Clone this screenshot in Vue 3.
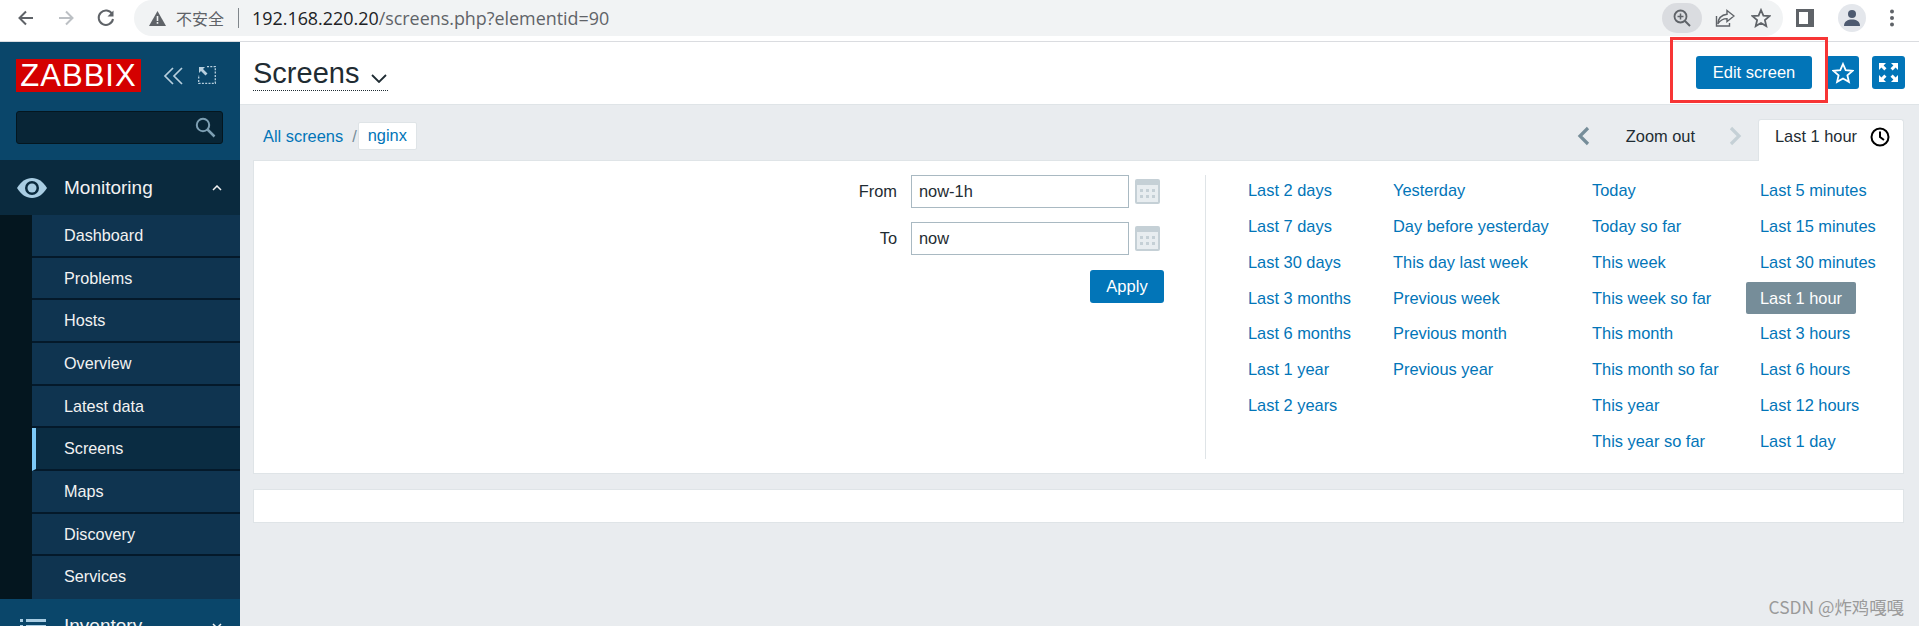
<script setup>
const menu = ['Dashboard', 'Problems', 'Hosts', 'Overview', 'Latest data', 'Screens', 'Maps', 'Discovery', 'Services']
const columns = [
  { width: 145, items: ['Last 2 days', 'Last 7 days', 'Last 30 days', 'Last 3 months', 'Last 6 months', 'Last 1 year', 'Last 2 years'] },
  { width: 199, items: ['Yesterday', 'Day before yesterday', 'This day last week', 'Previous week', 'Previous month', 'Previous year'] },
  { width: 168, items: ['Today', 'Today so far', 'This week', 'This week so far', 'This month', 'This month so far', 'This year', 'This year so far'] },
  { width: 143, items: ['Last 5 minutes', 'Last 15 minutes', 'Last 30 minutes', 'Last 1 hour', 'Last 3 hours', 'Last 6 hours', 'Last 12 hours', 'Last 1 day'] }
]
</script>

<template>
  <div class="window">
    <header class="chrome">
      <svg class="nav" width="20" height="20" viewBox="0 0 20 20"><path d="M17 10H4M10 3.500 3.500 10l6.500 6.500" fill="none" stroke="#5f6368" stroke-width="2"/></svg>
      <svg class="nav" width="20" height="20" viewBox="0 0 20 20"><path d="M3 10h13M10 3.500l6.500 6.500-6.500 6.500" fill="none" stroke="#bcc0c4" stroke-width="2"/></svg>
      <svg class="nav" width="20" height="20" viewBox="0 0 20 20"><path d="M16.200 6.200A7.200 7.200 0 1 0 17 11" fill="none" stroke="#5f6368" stroke-width="2"/><path d="M17.500 2.500v6h-6z" fill="#5f6368"/></svg>
      <div class="omnibox">
        <svg width="17" height="15" viewBox="0 0 17 15"><path d="M8.500 0 17 15H0z" fill="#5f6368"/><path d="M7.700 5h1.600v5H7.700zM7.700 11h1.600v1.700H7.700z" fill="#f1f3f4"/></svg>
        <span class="insecure">不安全</span>
        <span class="sep"></span>
        <span class="url"><b>192.168.220.20</b>/screens.php?elementid=90</span>
        <span class="grow"></span>
        <span class="zoompill">
          <svg width="20" height="20" viewBox="0 0 20 20"><circle cx="8.500" cy="8.500" r="6" fill="none" stroke="#5f6368" stroke-width="1.800"/><path d="M13 13l5 5" stroke="#5f6368" stroke-width="2"/><path d="M5.500 8.500h6M8.500 5.500v6" stroke="#5f6368" stroke-width="1.500"/></svg>
        </span>
        <svg class="omni-ico" width="20" height="20" viewBox="0 0 20 20"><path d="M12 2.500 19 8l-7 5.500V10.600C7.500 10.600 5 12.500 2.800 16c.4-5.500 3.700-9 9.200-9.700z" fill="none" stroke="#5f6368" stroke-width="1.400"/><path d="M1.500 8v10h13v-3" fill="none" stroke="#5f6368" stroke-width="1.400"/></svg>
        <svg class="omni-star" width="20" height="20" viewBox="0 0 20 20"><path d="m10 2 2.400 5.600 6.100.5-4.600 4 1.400 6L10 15l-5.300 3.100 1.400-6-4.600-4 6.100-.5z" fill="none" stroke="#5f6368" stroke-width="1.800"/></svg>
      </div>
      <svg class="panel" width="18" height="18" viewBox="0 0 18 18"><path d="M0 0h18v18H0z" fill="#5f6368"/><path d="M3 3h9v12H3z" fill="#fff"/></svg>
      <span class="avatar"><svg width="18" height="18" viewBox="0 0 18 18"><circle cx="9" cy="5" r="4" fill="#4d5a70"/><path d="M1 17c0-5 4-6.500 8-6.500S17 12 17 17z" fill="#4d5a70"/></svg></span>
      <svg class="dots" width="6" height="18" viewBox="0 0 6 18"><circle cx="3" cy="2.500" r="2" fill="#5f6368"/><circle cx="3" cy="9" r="2" fill="#5f6368"/><circle cx="3" cy="15.500" r="2" fill="#5f6368"/></svg>
    </header>

    <div class="page">
      <aside class="sidebar">
        <div class="brand">
          <span class="logo">ZABBIX</span>
          <svg class="collapse" width="21" height="18" viewBox="0 0 21 18"><path d="M10 1 2 9l8 8M19 1l-8 8 8 8" fill="none" stroke="#b7cfde" stroke-width="1.700"/></svg>
          <svg class="mode" width="18" height="18" viewBox="0 0 18 18"><path d="M9 .7h8.300V17.300H.7V9" fill="none" stroke="#b7cfde" stroke-width="1.300" stroke-dasharray="2 1.300"/><path d="M1 1h6L5 3l4.500 4.500L7.500 9.500 3 5 1 7z" fill="#b7cfde"/></svg>
        </div>
        <div class="search">
          <svg width="21" height="21" viewBox="0 0 21 21"><circle cx="8" cy="8" r="6.200" fill="none" stroke="#7d9fb3" stroke-width="2"/><path d="m12.500 12.500 7 7" stroke="#7d9fb3" stroke-width="2.500"/></svg>
        </div>
        <div class="section open">
          <svg width="30" height="20" viewBox="0 0 30 20"><path d="M0 10C4 3.500 9 0 15 0s11 3.500 15 10c-4 6.500-9 10-15 10S4 16.500 0 10z" fill="#a9cde3"/><circle cx="15" cy="10" r="7" fill="#0a2a3e"/><circle cx="15" cy="10" r="4.500" fill="#a9cde3"/></svg>
          <span>Monitoring</span>
          <svg class="caret" width="10" height="6" viewBox="0 0 10 6"><path d="M1 5l4-4 4 4" fill="none" stroke="#f2f2f2" stroke-width="1.500"/></svg>
        </div>
        <ul class="submenu">
          <li v-for="m in menu" :key="m" :class="{ active: m === 'Screens' }">{{ m }}</li>
        </ul>
        <div class="section closed">
          <svg width="26" height="18" viewBox="0 0 26 18"><path d="M0 2h3v3H0zM6 2h20v3H6zM0 8h3v3H0zM6 8h20v3H6zM0 14h3v3H0zM6 14h20v3H6z" fill="#a9cde3"/></svg>
          <span>Inventory</span>
          <svg class="caret" width="10" height="6" viewBox="0 0 10 6"><path d="M1 1l4 4 4-4" fill="none" stroke="#f2f2f2" stroke-width="1.500"/></svg>
        </div>
      </aside>

      <main class="main">
        <div class="titlebar">
          <h1 class="title">Screens <svg width="16" height="9" viewBox="0 0 16 9"><path d="M1 1l7 7 7-7" fill="none" stroke="#1f2c33" stroke-width="1.800"/></svg></h1>
          <div class="actions">
            <button class="btn edit">Edit screen</button>
            <button class="btn square">
              <svg width="22" height="22" viewBox="0 0 22 22"><path d="m11 2 2.700 6.200 6.800.6-5.100 4.500 1.500 6.600L11 16.500l-5.900 3.400 1.500-6.600-5.100-4.500 6.800-.6z" fill="none" stroke="#fff" stroke-width="1.800"/></svg>
            </button>
            <button class="btn square">
              <svg width="21" height="21" viewBox="0 0 21 21"><path d="M1 1h7L5.600 3.400 8.500 6.300 6.300 8.500 3.400 5.600 1 8zM20 1v7l-2.400-2.400-2.900 2.900-2.200-2.200 2.900-2.900L13 1zM1 20v-7l2.400 2.400 2.900-2.900 2.200 2.200-2.900 2.900L8 20zM20 20h-7l2.400-2.400-2.900-2.900 2.200-2.200 2.900 2.900L20 13z" fill="#fff"/></svg>
            </button>
          </div>
        </div>

        <div class="navbar">
          <a class="link">All screens</a>
          <span class="slash">/</span>
          <a class="link crumb">nginx</a>
          <span class="grow"></span>
          <svg class="chev" width="13" height="20" viewBox="0 0 13 20"><path d="M11 2 3 10l8 8" fill="none" stroke="#768d99" stroke-width="3.200"/></svg>
          <span class="zoomout">Zoom out</span>
          <svg class="chev" width="13" height="20" viewBox="0 0 13 20"><path d="m2 2 8 8-8 8" fill="none" stroke="#c5d0d6" stroke-width="3.200"/></svg>
          <div class="tab">
            <span>Last 1 hour</span>
            <svg width="20" height="20" viewBox="0 0 20 20"><circle cx="10" cy="10" r="8.500" fill="none" stroke="#000" stroke-width="2"/><path d="M10 4.500V10l4 3" fill="none" stroke="#000" stroke-width="2"/></svg>
          </div>
        </div>

        <section class="filter">
          <div class="form">
            <div class="row">
              <label>From</label>
              <div class="input">now-1h</div>
              <svg class="cal" width="25" height="25" viewBox="0 0 25 25"><rect width="25" height="25" rx="2" fill="#c5d0d6"/><rect x="2" y="6" width="21" height="17" fill="#e8edf0"/><path d="M5 10h3v3H5zM11 10h3v3h-3zM17 10h3v3h-3zM5 16h3v3H5zM11 16h3v3h-3zM17 16h3v3h-3z" fill="#c5d0d6"/></svg>
            </div>
            <div class="row">
              <label>To</label>
              <div class="input">now</div>
              <svg class="cal" width="25" height="25" viewBox="0 0 25 25"><rect width="25" height="25" rx="2" fill="#c5d0d6"/><rect x="2" y="6" width="21" height="17" fill="#e8edf0"/><path d="M5 10h3v3H5zM11 10h3v3h-3zM17 10h3v3h-3zM5 16h3v3H5zM11 16h3v3h-3zM17 16h3v3h-3z" fill="#c5d0d6"/></svg>
            </div>
            <button class="btn apply">Apply</button>
          </div>
          <div class="ranges">
            <div v-for="(c, i) in columns" :key="i" class="col" :style="{ width: c.width + 'px' }">
              <a v-for="t in c.items" :key="t" class="link range" :class="{ selected: t === 'Last 1 hour' }">{{ t }}</a>
            </div>
          </div>
        </section>

        <section class="empty"></section>
      </main>
    </div>

    <div class="annotation"></div>
    <div class="watermark">CSDN @炸鸡嘎嘎</div>
  </div>
</template>

<style scoped>
.window {
  position: relative;
  width: 1919px;
  height: 626px;
  overflow: hidden;
  font-family: "Liberation Sans", Arial, sans-serif;
  font-size: 16.400px;
  background: #e9ecef;
  color: #1f2c33;
}
.grow { flex: 1; }
.chrome {
  height: 42px;
  box-sizing: border-box;
  background: #fff;
  border-bottom: 1px solid #dadce0;
  display: flex;
  align-items: center;
  padding: 0 0 5px 16px;
}
.nav { margin-right: 20px; flex: none; }
.omnibox {
  width: 1649px;
  height: 36px;
  margin: 0 0 0 -2px;
  border-radius: 18px;
  background: #f1f3f4;
  display: flex;
  align-items: center;
  padding-left: 15px;
  box-sizing: border-box;
}
.insecure {
  font-family: "Noto Sans CJK SC", sans-serif;
  font-size: 16px;
  color: #5f6368;
  margin-left: 10px;
}
.sep { width: 1px; height: 20px; background: #80868b; margin: 0 13px 0 14px; }
.url {
  font-family: "Open Sans", sans-serif;
  font-size: 17.900px;
  color: #5f6368;
  white-space: nowrap;
}
.url b { font-weight: 400; color: #202124; }
.zoompill {
  width: 40px;
  height: 30px;
  border-radius: 15px;
  background: #dadce0;
  display: flex;
  align-items: center;
  justify-content: center;
  margin-right: 13px;
}
.omni-ico { margin-right: 16px; }
.omni-star { margin-right: 12px; }
.panel { margin-left: 13px; margin-right: 24px; }
.avatar {
  width: 28px;
  height: 28px;
  border-radius: 50%;
  background: #e4e7ec;
  display: flex;
  align-items: center;
  justify-content: center;
}
.dots { margin-left: 23px; }

.page { display: flex; height: 584px; }
.sidebar { width: 240px; flex: none; background: #0a466a; display: flex; flex-direction: column; overflow: hidden; }
.sidebar > * { flex: none; }
.brand { height: 69px; padding: 17px 0 0 16px; display: flex; align-items: flex-start; box-sizing: border-box; }
.logo {
  width: 125px;
  height: 33px;
  background: #d40000;
  color: #fff;
  font-size: 31px;
  line-height: 33px;
  text-align: center;
  letter-spacing: 1px;
}
.collapse { margin: 8px 0 0 22px; }
.mode { margin: 7px 0 0 14px; }
.search {
  width: 207px;
  height: 33px;
  margin-left: 16px;
  box-sizing: border-box;
  background: #082536;
  border: 1px solid #04161f;
  border-radius: 3px;
  display: flex;
  align-items: center;
  justify-content: flex-end;
  padding-right: 6px;
}
.section {
  height: 55px;
  display: flex;
  align-items: center;
  color: #f2f2f2;
  font-size: 19px;
}
.section .caret { margin-left: auto; margin-right: 18px; }
.section.open { background: #0a2a3e; margin-top: 16px; padding-left: 17px; }
.section.open span { margin-left: 17px; }
.section.closed { padding-left: 20px; }
.section.closed span { margin-left: 18px; }
.submenu {
  list-style: none;
  margin: 0;
  padding: 0 0 0 32px;
  background: #04161f;
}
.submenu li {
  height: 42.670px;
  box-sizing: border-box;
  background: #0f3450;
  border-bottom: 2px solid #04192a;
  color: #f2f2f2;
  padding-left: 32px;
  line-height: 40px;
  font-size: 16.200px;
}
.submenu li:last-child { border-bottom: 0; }
.submenu li.active {
  background: #0a2c42;
  border-left: 4px solid #7cc9f7;
  padding-left: 28px;
}

.main { flex: 1; padding-bottom: 0; min-width: 0; }
.titlebar {
  height: 63px;
  box-sizing: border-box;
  background: #fff;
  border-bottom: 1px solid #dfe4e7;
  padding: 14px 14px 0 13px;
  display: flex;
  justify-content: space-between;
  align-items: flex-start;
}
.title {
  margin: 1px 0 0;
  font-weight: 400;
  font-size: 29px;
  line-height: 32px;
  height: 33px;
  width: 135px;
  white-space: nowrap;
  border-bottom: 1px dotted #1f2c33;
}
.title svg { margin-left: 4px; }
.actions { display: flex; gap: 13px; }
.btn {
  border: 0;
  background: #0275b8;
  color: #fff;
  font: 16.500px "Liberation Sans", Arial, sans-serif;
  border-radius: 3px;
  height: 33px;
  padding: 0;
  display: flex;
  align-items: center;
  justify-content: center;
}
.edit { width: 116px; margin-right: 1px; }
.square { width: 33px; }

.navbar {
  height: 55px;
  display: flex;
  align-items: flex-end;
  padding: 0 15px 0 13px;
}
.link { color: #0275b8; white-space: nowrap; }
.navbar > .link:first-child { margin: 0 0 14px 10px; }
.slash { margin: 0 1px 14px 9px; color: #768d99; }
.crumb {
  background: #fff;
  border: 1px solid #dfe4e7;
  border-radius: 2px;
  height: 28px;
  line-height: 25px;
  box-sizing: border-box;
  padding: 0 9px;
  margin-bottom: 10px;
}
.chev { margin-bottom: 14px; }
.zoomout { margin: 0 34px 14px 36px; }
.tab {
  width: 146px;
  height: 42px;
  margin-left: 16px;
  background: #fff;
  border: 1px solid #dfe4e7;
  border-bottom: 0;
  border-radius: 3px 3px 0 0;
  box-sizing: border-box;
  padding: 0 13px 8px 16px;
  display: flex;
  align-items: center;
  justify-content: space-between;
  position: relative;
  top: 1px;
}

.filter {
  height: 314px;
  margin-right: 15px;
  margin-left: 13px;
  box-sizing: border-box;
  background: #fff;
  border: 1px solid #dfe4e7;
  display: flex;
  padding-top: 14px;
}
.form {
  flex: none;
  width: 952px;
  height: 284px;
  box-sizing: border-box;
  border-right: 1px solid #dfe4e7;
  display: flex;
  flex-direction: column;
  align-items: flex-end;
  padding-right: 41px;
}
.row { display: flex; align-items: center; height: 33px; margin-bottom: 14px; margin-right: 4px; }
.row label { margin-right: 14px; }
.input {
  width: 218px;
  height: 33px;
  box-sizing: border-box;
  border: 1px solid #a9b9c2;
  padding-left: 7px;
  line-height: 31px;
}
.cal { margin-left: 6px; }
.apply { width: 74px; margin-top: 1px; }
.ranges { display: flex; padding-left: 42px; margin-top: -1px; }
.col { display: flex; flex-direction: column; flex: none; }
.range { height: 35.850px; line-height: 32px; flex: none; }
.selected {
  background: #768d99;
  color: #fff;
  border-radius: 2px;
  width: 110px;
  height: 32px;
  padding-left: 14px;
  margin: 0 0 3.850px -14px;
  box-sizing: border-box;
}
.empty {
  height: 34px;
  margin: 15px 15px 0 13px;
  box-sizing: border-box;
  background: #fff;
  border: 1px solid #dfe4e7;
}
.annotation {
  position: absolute;
  left: 1670px;
  top: 37px;
  width: 158px;
  height: 66px;
  box-sizing: border-box;
  border: 3px solid #f73535;
}
.watermark {
  position: absolute;
  right: 15px;
  top: 597px;
  font-family: "Noto Sans CJK SC", sans-serif;
  font-size: 17.400px;
  line-height: 20px;
  color: #9a9a9a;
}
</style>
